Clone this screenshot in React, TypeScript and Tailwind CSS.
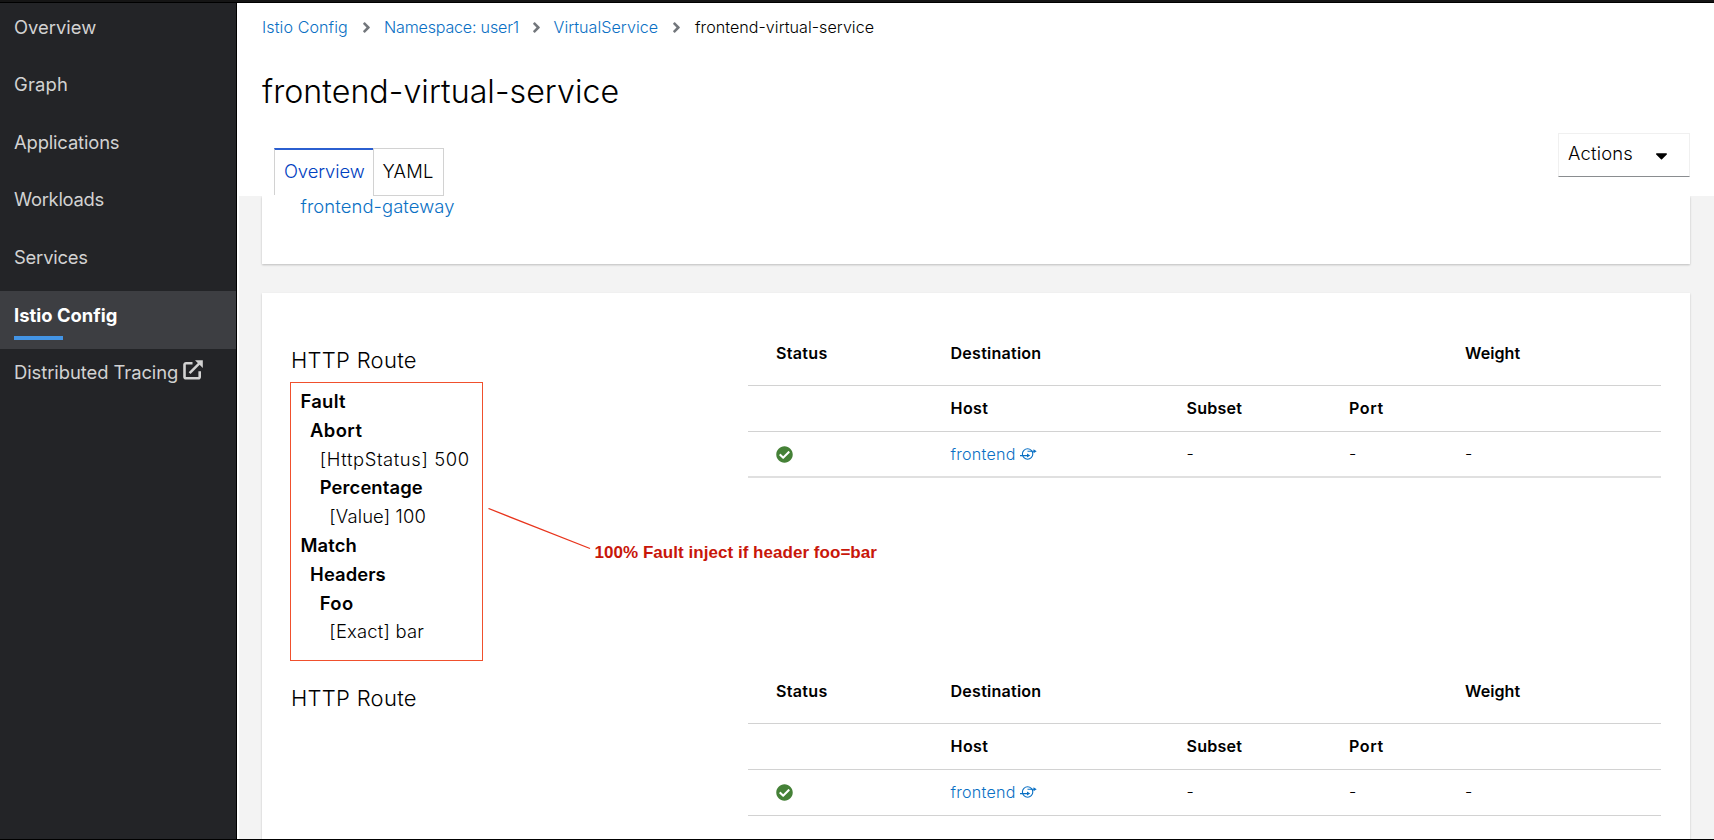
import type { ReactNode } from "react";
import { FaAngleRight, FaCaretDown, FaCheckCircle } from "react-icons/fa";

const navItems = [
  { label: "Overview", tracking: "" },
  { label: "Graph", tracking: "tracking-[0.2px]" },
  { label: "Applications", tracking: "tracking-[-0.15px]" },
  { label: "Workloads", tracking: "tracking-[-0.27px]" },
  { label: "Services", tracking: "tracking-[-0.2px]" },
  { label: "Istio Config", tracking: "tracking-[0.02px]", active: true },
  { label: "Distributed Tracing", tracking: "tracking-[-0.06px]", external: true },
];

function ExternalIcon() {
  return (
    <svg viewBox="0 0 20 20" className="size-5" fill="none" stroke="currentColor" strokeWidth="2.6">
      <path d="M9.5 3.2H3a1.5 1.5 0 0 0-1.5 1.5v12a1.5 1.5 0 0 0 1.5 1.5h12.2a1.5 1.5 0 0 0 1.5-1.5v-5.4" />
      <path d="M6.6 13.2 16.6 3.2" />
      <path d="M12 .2h7.8V8z" fill="currentColor" stroke="none" />
    </svg>
  );
}

function ServiceIcon() {
  return (
    <svg viewBox="0 0 17 14" className="h-[14px] w-[17px]" fill="none" stroke="currentColor" strokeWidth="1.1">
      <circle cx="7.6" cy="7" r="5.2" />
      <path d="M0 8.6h8M7.5 4.2h7" />
      <path d="M7 6.6 10.2 8.6 7 10.6zM13.5 2.2 16.7 4.2 13.5 6.2z" fill="currentColor" stroke="none" />
    </svg>
  );
}

function Sidebar() {
  return (
    <nav className="w-[237px] shrink-0 border-r border-black bg-[#232427]">
      {navItems.map((item) => (
        <div
          key={item.label}
          className={`h-[57.6px] pl-[14px] pt-[9.6px] text-[18.4px] leading-[28.8px] ${
            item.active ? "bg-[#3d3e42] font-bold text-white" : "text-[#d2d2d2]"
          }`}
        >
          <div className="flex items-center">
            <span className={item.tracking}>{item.label}</span>
            {item.external && (
              <span className="-mt-1.5 ml-[5px]">
                <ExternalIcon />
              </span>
            )}
          </div>
          {item.active && <div className="mt-[6.6px] h-1 w-[49px] bg-[#4394e5]" />}
        </div>
      ))}
    </nav>
  );
}

function Separator() {
  return <FaAngleRight className="size-[17px] text-[#72767b]" />;
}

function PageHeader() {
  return (
    <header className="h-[193px] shrink-0 bg-white pl-[23px] pr-6">
      <div className="flex h-[49px] items-center text-[16.1px] font-light text-[#0a70c4]">
        <a className="w-[96px] tracking-[0.08px]">Istio Config</a>
        <Separator />
        <a className="ml-[9px] w-[143.5px] tracking-[-0.2px]">Namespace: user1</a>
        <Separator />
        <a className="ml-[9px] w-[114px] tracking-[0.04px]">VirtualService</a>
        <Separator />
        <span className="ml-[10.5px] tracking-[0.04px] text-black">frontend-virtual-service</span>
      </div>
      <h1 className="mt-[18px] h-11 whitespace-nowrap text-[32.2px] font-light leading-[44px] tracking-[0.04px] text-black">
        frontend-virtual-service
      </h1>
      <div className="flex items-start justify-between text-[18.4px] font-light">
        <div className="ml-3 mt-[34px] flex h-12">
          <div className="h-[47px] w-[99px] border-l border-t-2 border-l-[#d2d2d2] border-t-[#2b5fd0] pl-[9px] leading-[43px] tracking-[-0.08px] text-[#0040c0]">
            Overview
          </div>
          <div className="w-[71px] border border-[#d2d2d2] pl-[8.5px] leading-[44px] tracking-[0.2px] text-black">
            YAML
          </div>
        </div>
        <button className="mt-[19px] flex h-[44px] w-[132px] items-center justify-between border border-[#f0f0f0] border-b-[#8a8d90] pl-[9px] pr-[18px] tracking-[0.2px] text-black">
          <span className="-mt-0.5">Actions</span>
          <FaCaretDown className="size-[19px]" />
        </button>
      </div>
    </header>
  );
}

const columns = "grid grid-cols-[28px_174.5px_236px_162.5px_116px_1fr]";

function RouteTable({ last }: { last?: boolean }) {
  return (
    <div className="w-[913px] text-[16.1px] text-black">
      <div className={`${columns} h-16 border-b border-[#d2d2d2] font-semibold leading-[62px]`}>
        <span />
        <span className="tracking-[0.3px]">Status</span>
        <span className="tracking-[0.22px]">Destination</span>
        <span />
        <span />
        <span className="tracking-[0.05px]">Weight</span>
      </div>
      <div className={`${columns} h-[46px] border-b border-[#d2d2d2] font-semibold leading-[45px]`}>
        <span />
        <span />
        <span className="tracking-[0.4px]">Host</span>
        <span className="tracking-[0.2px]">Subset</span>
        <span className="tracking-[0.6px]">Port</span>
        <span />
      </div>
      <div
        className={`${columns} h-[46px] font-light leading-[44px] ${
          last ? "border-b border-[#d2d2d2]" : "border-b-2 border-[#e0e0e0]"
        }`}
      >
        <span />
        <span className="flex items-center pb-px">
          <FaCheckCircle className="size-[17px] text-[#458137]" />
        </span>
        <span className="flex items-center gap-1 pb-px text-[#0a70c4]">
          <span className="tracking-[0.25px]">frontend</span>
          <ServiceIcon />
        </span>
        <span>-</span>
        <span>-</span>
        <span>-</span>
      </div>
    </div>
  );
}

function Line({ depth, bold, tracking, children }: { depth: number; bold?: boolean; tracking: string; children: ReactNode }) {
  const indent = ["pl-0", "pl-[9.6px]", "pl-[19.2px]", "pl-[28.8px]"][depth];
  return <div className={`${indent} ${tracking} ${bold ? "font-semibold" : "font-light"}`}>{children}</div>;
}

function RouteTitle() {
  return <h2 className="h-7 text-[22px] font-light leading-7 tracking-[0.28px] text-black">HTTP Route</h2>;
}

function FaultRules() {
  return (
    <div className="relative -ml-px mt-[8px] h-[279px] w-[193px] border border-[#f0502d] pl-[9.5px] pt-[4px] text-[18.4px] leading-[28.8px] text-black">
      <Line depth={0} bold tracking="tracking-[0.3px]">Fault</Line>
      <Line depth={1} bold tracking="tracking-[0.4px]">Abort</Line>
      <Line depth={2} tracking="tracking-[0.6px]">[HttpStatus] 500</Line>
      <Line depth={2} bold tracking="tracking-[0.12px]">Percentage</Line>
      <Line depth={3} tracking="tracking-[0.15px]">[Value] 100</Line>
      <Line depth={0} bold tracking="tracking-[0.1px]">Match</Line>
      <Line depth={1} bold tracking="tracking-[0.08px]">Headers</Line>
      <Line depth={2} bold tracking="tracking-[0.4px]">Foo</Line>
      <Line depth={3} tracking="tracking-[0.2px]">[Exact] bar</Line>
      <div className="absolute left-[197px] top-[125px] flex w-[420px] items-start">
        <svg viewBox="0 0 104 42" className="h-[42px] w-[104px] shrink-0" stroke="#e8341c" strokeWidth="1.3">
          <path d="M0.5 0.5 102 40.5" />
        </svg>
        <span className="ml-[2.5px] mt-[31px] whitespace-nowrap font-['Liberation_Sans',sans-serif] text-[17px] font-bold leading-[28px] tracking-[0.04px] text-[#c8170a]">
          100% Fault inject if header foo=bar
        </span>
      </div>
    </div>
  );
}

export default function App() {
  return (
    <div className="flex h-[840px] w-[1714px] flex-col overflow-hidden border-b border-black bg-white font-['Inter',sans-serif]">
      <div className="h-[3px] shrink-0 border-b border-black bg-[#151515]" />
      <div className="flex min-h-0 flex-1">
        <Sidebar />
        <main className="flex min-w-0 flex-1 flex-col overflow-hidden border-l-2 border-white bg-[#f3f3f3]">
          <PageHeader />
          <div className="flex min-h-0 flex-1 flex-col gap-[29px] overflow-hidden pl-[23px] pr-6">
            <section className="h-[68px] shrink-0 bg-white pl-[38.5px] text-[18.4px] font-light leading-[21px] tracking-[0.1px] text-[#0a70c4] shadow-[0_1px_2px_rgba(3,3,3,0.22)]">
              frontend-gateway
            </section>
            <section className="flex-1 bg-white pl-[29px] pt-[29px] shadow-[0_1px_2px_rgba(3,3,3,0.2)]">
              <div className="flex h-[338px]">
                <div className="w-[457px] pt-[24px]">
                  <RouteTitle />
                  <FaultRules />
                </div>
                <RouteTable />
              </div>
              <div className="flex">
                <div className="w-[457px] pt-[24px]">
                  <RouteTitle />
                </div>
                <RouteTable last />
              </div>
            </section>
          </div>
        </main>
      </div>
    </div>
  );
}
